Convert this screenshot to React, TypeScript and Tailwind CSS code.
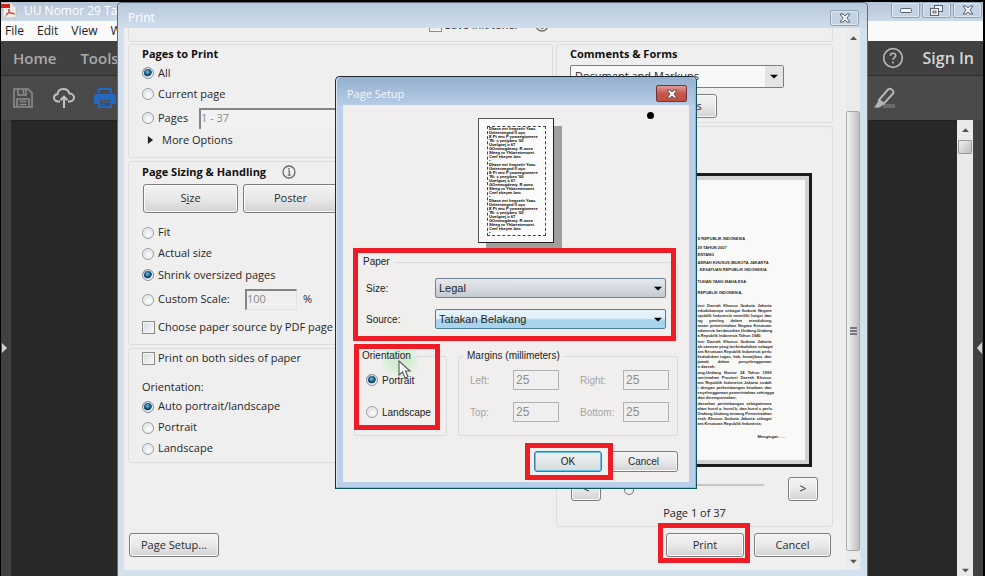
import type { ReactNode } from 'react';

const radioClass =
  "m-0 size-3 shrink-0 appearance-none rounded-full border border-[#9a9fa3] bg-[radial-gradient(circle_at_60%_65%,#ffffff,#cfd2d4)] shadow-[inset_0_0_0_1px_#f4f4f4] checked:border-[#8390a0] checked:bg-[radial-gradient(circle_at_45%_40%,#6fc3e8_0,#17557f_35%,#12395a_48%,#dfe6ea_58%)]";

const buttonClass =
  'rounded-[3px] border border-[#7d7d7d] bg-linear-to-b from-[#f3f3f3] via-[#e9e9e9] to-[#d2d2d2] text-center text-[#2a2a2a] shadow-[inset_0_0_0_1px_#fafafa]';

function Radio({ name, label, checked, row }: { name: string; label: string; checked?: boolean; row: string }) {
  return (
    <label className={`flex items-center gap-1 ${row}`}>
      <input type="radio" name={name} defaultChecked={checked} className={radioClass} />
      {label}
    </label>
  );
}

function Check({ label, row }: { label: string; row: string }) {
  return (
    <label className={`flex items-center gap-[3px] ${row}`}>
      <input
        type="checkbox"
        className="m-0 size-[13px] shrink-0 appearance-none border border-[#8b8b8b] bg-linear-to-br from-[#d8dadb] to-[#fafafa] shadow-[inset_0_0_0_1px_#f6f6f6]"
      />
      {label}
    </label>
  );
}

function Highlight({ place }: { place: string }) {
  return <div className={`pointer-events-none absolute z-10 border-5 border-[#ee1c25] ${place}`} />;
}

function Arrow({ dir, className }: { dir: 'up' | 'down' | 'left' | 'right'; className: string }) {
  const points = {
    up: '0,8 8,8 4,2',
    down: '0,1 8,1 4,7',
    left: '7,0 7,8 1,4',
    right: '1,0 1,8 7,4',
  }[dir];
  return (
    <svg viewBox="0 0 8 8" preserveAspectRatio="none" className={className} aria-hidden="true">
      <polygon points={points} fill="currentColor" />
    </svg>
  );
}

function CloseGlyph({ stroke, fill }: { stroke: string; fill: string }) {
  return (
    <svg viewBox="0 0 12 10" className="h-[10px] w-3" aria-hidden="true">
      <path
        d="M1 1h3l2 2 2-2h3L8 5l3 4H8L6 7 4 9H1l3-4z"
        fill={fill}
        stroke={stroke}
        strokeWidth="1"
        strokeLinejoin="round"
      />
    </svg>
  );
}

function InfoIcon() {
  return (
    <svg viewBox="0 0 14 14" className="size-[14px] shrink-0" aria-hidden="true">
      <circle cx="7" cy="7" r="6" fill="none" stroke="#6a6a6a" strokeWidth="1.3" />
      <path d="M6 6h1.4v4M5.7 10.2h3" fill="none" stroke="#6a6a6a" strokeWidth="1.2" />
      <circle cx="7" cy="3.8" r="0.9" fill="#6a6a6a" />
    </svg>
  );
}

function Group({ children, className }: { children: ReactNode; className: string }) {
  return <section className={`rounded-[3px] border border-[#dcdddf] ${className}`}>{children}</section>;
}

function WindowButton({ label, children }: { label: string; children: ReactNode }) {
  return (
    <button
      aria-label={label}
      className="flex h-4 w-[29px] items-center justify-center rounded-[2px] border border-[#8fa3b8] bg-[#c3d3e2] shadow-[inset_0_0_0_1px_#dce7f1]"
    >
      {children}
    </button>
  );
}

function ReaderWindow() {
  return (
    <div className="flex h-full flex-col bg-[#282828]">
      <header className="flex h-[19px] shrink-0 items-start bg-linear-to-b from-[#b4c5d6] to-[#cbdae8] pr-px">
        <svg viewBox="0 0 16 17" className="h-[17px] w-4" aria-hidden="true">
          <path d="M2 1h9l4 4v11H2z" fill="#f1efee" stroke="#b9b4b2" strokeWidth="0.7" />
          <path d="M11 1v4h4" fill="#d9d4d2" />
          <rect x="0" y="2" width="9" height="4" fill="#d8231c" />
          <path
            d="M8 7c1 3-2 6-4 7.500M8 7c-1 3 2 5 6 5M5 12c3-1.500 6-1.500 8-.5"
            fill="none"
            stroke="#d8332b"
            strokeWidth="1"
          />
        </svg>
        <span className="pl-[7px] text-[12px] leading-[18px] text-white">UU Nomor 29 Tah</span>
        <div className="ml-auto flex gap-[2px]">
          <WindowButton label="Minimize">
            <svg viewBox="0 0 12 5" className="h-[5px] w-3" aria-hidden="true">
              <rect x="0.500" y="0.500" width="11" height="4" rx="1" fill="#f4f4f4" stroke="#59646e" />
            </svg>
          </WindowButton>
          <WindowButton label="Restore">
            <svg viewBox="0 0 13 11" className="h-[11px] w-[13px]" aria-hidden="true">
              <rect x="4.500" y="0.500" width="8" height="6" fill="#f4f4f4" stroke="#59646e" />
              <rect x="0.500" y="3.500" width="8" height="7" fill="#f4f4f4" stroke="#59646e" />
              <rect x="3" y="6" width="3" height="2" fill="#c3d3e2" stroke="#59646e" strokeWidth="0.8" />
            </svg>
          </WindowButton>
          <WindowButton label="Close">
            <CloseGlyph stroke="#59646e" fill="#f4f4f4" />
          </WindowButton>
        </div>
      </header>
      <nav className="flex h-[20px] shrink-0 items-center gap-[13px] overflow-hidden bg-[#fbfafa] pl-1 text-[12px] text-[#1c1c1c]">
        <span>File</span>
        <span>Edit</span>
        <span>View</span>
        <span>Window</span>
      </nav>
      <div className="flex h-[35px] shrink-0 items-center border-b border-[#2e2e2e] bg-[#414141] pr-[9px] pl-3 text-[15px] font-semibold text-[#a9a9a9]">
        <span>Home</span>
        <span className="pl-6">Tools</span>
        <svg viewBox="0 0 22 22" className="ml-auto size-[22px]" aria-hidden="true">
          <circle cx="11" cy="11" r="9.300" fill="none" stroke="#b5b5b5" strokeWidth="1.700" />
          <path d="M8.300 8.800c0-3.400 5.400-3.300 5.400-.2 0 2-2.600 2-2.600 4.200" fill="none" stroke="#b5b5b5" strokeWidth="1.700" />
          <circle cx="11" cy="15.500" r="1.100" fill="#b5b5b5" />
        </svg>
        <span className="pl-[19px] text-[16px] text-[#d6d6d6]">Sign In</span>
      </div>
      <div className="flex h-[44px] shrink-0 items-center bg-[#4a4a4a] pr-[86px] pl-3">
        <svg viewBox="0 0 20 20" className="size-5" fill="none" stroke="#8c8c8c" strokeWidth="1.600" aria-hidden="true">
          <path d="M1 1h14l4 4v14H1z" />
          <path d="M5 1v6h8V1M10.500 2v4M4 19v-8h12v8M6.500 13.500h7M6.500 16.500h7" />
        </svg>
        <svg viewBox="0 0 22 20" className="ml-[20px] h-5 w-[22px]" fill="none" stroke="#c1c1c1" strokeWidth="2" aria-hidden="true">
          <path d="M7 13.500H5.500C2.800 13.500 1 11.800 1 9.800c0-2 1.500-3.500 3.400-3.600C4.900 3 7.400 1 10.300 1c3 0 5.300 1.800 6 4.500 2.700 0 4.700 1.700 4.700 4s-1.900 4-4.300 4H15" />
          <path d="M11 20V9M7.500 12.200 11 8.700l3.500 3.500" />
        </svg>
        <svg viewBox="0 0 22 20" className="ml-[19px] h-5 w-[22px]" aria-hidden="true">
          <path d="M4 0h14v5H4zM2 6h18l2 2v8h-4v4H4v-4H0V8z" fill="#2469bd" />
          <path d="M6 2h10v3H6zM6 12h10v6H6z" fill="#4a4a4a" />
          <path d="M7 13.300h8v1.300H7zM7 15.800h5v1.200H7z" fill="#2469bd" />
        </svg>
        <svg viewBox="0 0 24 22" className="ml-auto h-[22px] w-6" aria-hidden="true">
          <rect x="10" y="17" width="12" height="4" fill="#6b6b6b" />
          <path d="m6 13 9-10.500c2-2 7 1.500 5 4L11 16.500z" fill="none" stroke="#b4b4b4" strokeWidth="2" />
          <path d="M6 12.500 3.500 17 1 20.500l5 .3L8.500 19l3-2z" fill="#b4b4b4" />
        </svg>
      </div>
      <div className="flex min-h-0 flex-1">
        <div className="flex w-[10px] items-center bg-[#414141] text-[#d0d0d0]">
          <Arrow dir="right" className="h-[10px] w-[7px]" />
        </div>
        <div className="flex-1 border-t border-[#202020] bg-[#282828]" />
        <div className="flex w-4 flex-col items-center justify-between bg-[#ebe9ea] py-[3px] text-[#555]">
          <div className="flex w-full flex-col items-center gap-1 px-px">
            <Arrow dir="up" className="my-[4px] h-[5px] w-[7px]" />
            <div className="h-[14px] w-full rounded-[1px] border border-[#9a9a9a] bg-linear-to-br from-[#f2f2f2] to-[#bcbcbc]" />
          </div>
          <Arrow dir="down" className="h-[5px] w-[7px]" />
        </div>
        <div className="flex w-[10px] items-center justify-end bg-[#414141] text-[#d0d0d0]">
          <Arrow dir="left" className="h-3 w-[7px]" />
        </div>
      </div>
    </div>
  );
}

const paragraphs = [
  [
    'insi Daerah Khusus Ibukota Jakarta',
    'edudukannya sebagai Ibukota Negara',
    'epublik Indonesia memiliki fungsi dan',
    'ng penting dalam mendukung',
    'araan pemerintahan Negara Kesatuan',
    'ndonesia berdasarkan Undang-Undang',
    'a Republik Indonesia Tahun 1945;',
  ],
  [
    'insi Daerah Khusus Ibukota Jakarta',
    'ah otonom yang berkedudukan sebagai',
    'ara Kesatuan Republik Indonesia perlu',
    'kedudukan tugas, hak, kewajiban, dan',
    'jawab dalam penyelenggaraan',
    'n daerah;',
  ],
  [
    'ang-Undang Nomor 34 Tahun 1999',
    'merintahan Provinsi Daerah Khusus',
    'ara Republik Indonesia Jakarta sudah',
    'i dengan perkembangan keadaan dan',
    'enyelenggaraan pemerintahan sehingga',
    'dan disempurnakan;',
  ],
  [
    'dasarkan pertimbangan sebagaimana',
    'alam huruf a, huruf b, dan huruf c perlu',
    'Undang-Undang tentang Pemerintahan',
    'erah Khusus Ibukota Jakarta sebagai',
    'ara Kesatuan Republik Indonesia;',
  ],
];

function PrintPreview() {
  return (
    <div className="h-[294px] w-[234px] border-[3px] border-[#1b1b1d] bg-[#d3d3d4] p-1">
      <div className="h-full overflow-hidden bg-[#f9f9f8] pt-[56px] pl-[113px] font-['Liberation_Sans',sans-serif] text-[4px] leading-[5px] font-bold whitespace-nowrap text-[#2d2d2d]">
        <p>S REPUBLIK INDONESIA</p>
        <p className="mt-1">29 TAHUN 2007</p>
        <p className="mt-[2px]">ENTANG</p>
        <p className="mt-[3px]">AERAH KHUSUS IBUKOTA JAKARTA</p>
        <p className="mt-[2px]">, KESATUAN REPUBLIK INDONESIA</p>
        <p className="mt-[7px]">TUHAN YANG MAHA ESA</p>
        <p className="mt-[6px]">REPUBLIK INDONESIA,</p>
        <div className="mt-2 flex w-[74px] flex-col gap-px">
          {paragraphs.map((lines, p) => (
            <div key={p}>
              {lines.map((line, i) => (
                <p key={i} className={line.endsWith(';') ? '' : '[text-align-last:justify]'}>
                  {line}
                </p>
              ))}
            </div>
          ))}
        </div>
        <p className="mt-2 pl-[60px]">Mengingat: . . .</p>
      </div>
    </div>
  );
}

function PrintDialog() {
  return (
    <div
      role="dialog"
      aria-label="Print"
      className="absolute inset-x-[117px] top-[2px] bottom-0 flex flex-col rounded-t-[5px] border-x border-t border-[#5d6b7a] bg-[#d3e0ee] pr-[7px] pb-[6px] pl-[6px] text-[11px] text-[#262626]"
    >
      <header className="-mr-[7px] -ml-[6px] flex h-[25px] shrink-0 items-center justify-between rounded-t-[5px] bg-linear-to-b from-[#b7c9da] to-[#d0deec] pr-2 pl-[10px]">
        <span className="pt-1 text-[12px] text-white">Print</span>
        <div className="pt-1">
          <WindowButton label="Close print">
            <CloseGlyph stroke="#59646e" fill="#f4f4f4" />
          </WindowButton>
        </div>
      </header>
      <div className="flex min-h-0 flex-1 bg-[#f0efef]">
        <div className="flex min-w-0 flex-1 flex-col pr-[13px] pl-1">
          <div className="h-[14px] overflow-hidden rounded-b-[3px] border-x border-b border-[#dcdddf] pl-[300px]">
            <div className="-mt-[10px] flex items-center gap-4">
              <Check label="Save ink/toner" row="h-[14px]" />
              <InfoIcon />
            </div>
          </div>
          <div className="mt-[2px] flex gap-[3px]">
            <div className="flex min-w-0 flex-1 flex-col gap-[3px]">
              <Group className="h-[114px] pl-[13px]">
                <h2 className="h-[18px] text-[11px] leading-[18px] font-bold text-[#111]">Pages to Print</h2>
                <Radio name="pages" label="All" checked row="h-5" />
                <Radio name="pages" label="Current page" row="h-[22px]" />
                <div className="flex h-[26px] items-center">
                  <Radio name="pages" label="Pages" row="w-[57px]" />
                  <input
                    aria-label="Page range"
                    defaultValue="1 - 37"
                    className="h-[21px] w-[200px] border-t-2 border-l-2 border-[#858585] bg-[#f2f1f1] pb-1 text-[11px] text-[#8a8a8a]"
                  />
                </div>
                <div className="flex h-[18px] items-center gap-2 pl-[5px]">
                  <Arrow dir="right" className="h-2 w-[7px]" />
                  <span>More Options</span>
                </div>
              </Group>
              <Group className="h-[184px] pl-[13px]">
                <div className="flex h-5 items-center gap-4">
                  <h2 className="text-[11px] font-bold text-[#111]">Page Sizing &amp; Handling</h2>
                  <InfoIcon />
                </div>
                <div className="mt-[2px] flex h-[29px] gap-[5px] pl-px">
                  <button className={`w-[95px] ${buttonClass}`}>
                    S<span className="underline">i</span>ze
                  </button>
                  <button className={`w-[95px] ${buttonClass}`}>Poster</button>
                  <button className={`w-[95px] ${buttonClass}`}>Multiple</button>
                  <button className={`w-[95px] ${buttonClass}`}>Booklet</button>
                </div>
                <div className="mt-[9px]">
                  <Radio name="sizing" label="Fit" row="h-[21px]" />
                  <Radio name="sizing" label="Actual size" row="h-[21px]" />
                  <Radio name="sizing" label="Shrink oversized pages" checked row="h-[22px]" />
                </div>
                <div className="flex h-[27px] items-center">
                  <Radio name="sizing" label="Custom Scale:" row="w-[103px]" />
                  <input
                    aria-label="Custom scale percent"
                    defaultValue="100"
                    className="h-[21px] w-[52px] border-t-2 border-r border-b border-l-2 border-t-[#858585] border-r-[#e2e2e2] border-b-[#e2e2e2] border-l-[#858585] bg-[#f0efef] pb-1 text-[11px] text-[#8a8a8a]"
                  />
                  <span className="pl-[6px]">%</span>
                </div>
                <Check label="Choose paper source by PDF page size" row="mt-1 h-5" />
              </Group>
              <Group className="h-[115px] pl-[13px]">
                <Check label="Print on both sides of paper" row="h-[18px]" />
                <p className="mt-[11px] h-[18px] leading-[18px]">Orientation:</p>
                <Radio name="orient" label="Auto portrait/landscape" checked row="h-[21px]" />
                <Radio name="orient" label="Portrait" row="h-[21px]" />
                <Radio name="orient" label="Landscape" row="h-[21px]" />
              </Group>
            </div>
            <div className="flex w-[277px] flex-col gap-[3px]">
              <Group className="h-[79px] px-[13px]">
                <h2 className="h-[18px] text-[11px] leading-[18px] font-bold text-[#111]">
                  <label htmlFor="comments">Comments &amp; Forms</label>
                </h2>
                <div className="relative mt-[2px] w-[214px]">
                  <select
                    id="comments"
                    className="block h-[23px] w-full appearance-none rounded-[2px] border border-[#7d7d7d] bg-[#f8f8f8] pl-1"
                  >
                    <option>Document and Markups</option>
                  </select>
                  <div className="pointer-events-none absolute inset-y-px right-px flex w-[18px] items-center justify-center bg-[#e4e4e4] text-black">
                    <Arrow dir="down" className="h-[5px] w-2" />
                  </div>
                </div>
                <button className={`mt-[6px] h-6 w-[147px] ${buttonClass}`}>Summarize Comments</button>
              </Group>
              <Group className="h-[401px] px-[14px] pt-[46px]">
                <div className="-mx-[14px] flex justify-center">
                  <PrintPreview />
                </div>
                <div className="mt-[10px] flex items-center">
                  <button className={`h-6 w-[30px] text-[12px] ${buttonClass}`}>&lt;</button>
                  <input
                    type="range"
                    aria-label="Preview page"
                    min={1}
                    max={37}
                    defaultValue={4}
                    className="mr-auto mb-2 ml-[11px] h-4 w-[152px] appearance-none bg-transparent [&::-webkit-slider-runnable-track]:h-[2px] [&::-webkit-slider-runnable-track]:bg-[#c6c6c6] [&::-webkit-slider-thumb]:-mt-2 [&::-webkit-slider-thumb]:h-[19px] [&::-webkit-slider-thumb]:w-[10px] [&::-webkit-slider-thumb]:appearance-none [&::-webkit-slider-thumb]:rounded-b-full [&::-webkit-slider-thumb]:border [&::-webkit-slider-thumb]:border-[#777] [&::-webkit-slider-thumb]:bg-[#eeeeee]"
                  />
                  <button className={`h-6 w-[30px] text-[12px] ${buttonClass}`}>&gt;</button>
                </div>
                <p className="mt-[3px] text-center leading-[18px]">Page 1 of 37</p>
              </Group>
            </div>
          </div>
          <footer className="mt-[6px] flex h-6 items-stretch pr-[2px] pl-px">
            <button className={`w-[90px] ${buttonClass}`}>Page Setup...</button>
            <div className="relative ml-auto flex">
              <button className={`w-[78px] ${buttonClass}`}>Print</button>
              <Highlight place="-top-[10px] -right-[6px] -bottom-[6px] -left-2" />
            </div>
            <button className={`ml-[10px] w-[77px] ${buttonClass}`}>Cancel</button>
          </footer>
        </div>
        <div className="flex w-[14px] flex-col items-center bg-[#ecebeb] text-[#555]">
          <Arrow dir="up" className="mt-[7px] mb-[71px] h-[5px] w-[7px]" />
          <div className="flex w-full flex-1 flex-col items-center justify-center gap-px rounded-[2px] border border-[#a9a9a9] bg-linear-to-r from-[#f4f4f4] to-[#bfbec2]">
            <div className="h-[2px] w-[7px] bg-[#77787c]" />
            <div className="h-[2px] w-[7px] bg-[#77787c]" />
            <div className="h-[2px] w-[7px] bg-[#77787c]" />
          </div>
          <Arrow dir="down" className="mt-2 mb-[6px] h-[5px] w-[7px]" />
        </div>
      </div>
    </div>
  );
}

const sampleBlock = [
  'Dhase eet fregsetir Yaac.',
  'Ueieeseeged fl oyo',
  'E Pt eeo P yoweegtomere',
  "'Ri: c yeejybeo '00",
  'Uoefgoej o 67',
  'GOneeogdemy. R ooeo',
  'Sfeeg ro Yhbereteeooet.',
  'Ceef ebeyee beo',
  '•',
];

function PaperThumbnail() {
  return (
    <div className="mx-auto h-[125px] w-[76px] border border-[#555] border-r-[#222] border-b-[#222] bg-[#fbfbfb] px-2 pt-[7px] shadow-[8px_8px_0_#9f9f9f]">
      <div className="w-[59px] overflow-hidden border border-dashed border-[#444] pl-px font-['Liberation_Sans',sans-serif] text-[4px] leading-[4px] font-bold whitespace-nowrap text-black">
        {[0, 1, 2].map((block) => sampleBlock.map((line, i) => <p key={`${block}-${i}`}>{line}</p>))}
      </div>
    </div>
  );
}

function SetupSelect({ id, label, value, tone }: { id: string; label: string; value: string; tone: string }) {
  return (
    <div className="flex items-center">
      <label htmlFor={id} className="w-[69px]">
        {label}
      </label>
      <div className="relative flex-1">
        <select
          id={id}
          className={`block h-5 w-full appearance-none rounded-[2px] border pl-[3px] text-[11px] leading-4 text-[#1f1f1f] ${tone}`}
        >
          <option>{value}</option>
        </select>
        <Arrow dir="down" className="pointer-events-none absolute top-2 right-1 h-[5px] w-2 text-black" />
      </div>
    </div>
  );
}

function Margin({ id, label }: { id: string; label: string }) {
  return (
    <div className="flex items-center">
      <label htmlFor={id} className="w-[43px]">
        {label}
      </label>
      <input
        id={id}
        disabled
        defaultValue="25"
        className="h-5 w-[46px] border border-[#b0b0b0] bg-[#f0efef] pl-[2px] text-[12px] text-[#8d8d8d]"
      />
    </div>
  );
}

function PageSetupDialog() {
  return (
    <div
      role="dialog"
      aria-label="Page Setup"
      className="absolute top-[76px] left-[335px] w-[362px] rounded-t-[5px] border border-[#1d2a36] border-r-[#0d5560] border-b-[#0d5560] bg-[#bad0ea] px-[7px] pb-[6px] font-['Liberation_Sans',Arial,sans-serif] text-[10px] text-[#222] shadow-[inset_-1px_-1px_0_#6cc9dd,inset_1px_1px_0_#dbe7f4]"
    >
      <header className="-mx-[6px] flex h-7 items-center justify-between rounded-t-[5px] bg-linear-to-b from-[#94b0ce] to-[#b6cce7] pr-2 pl-[10px]">
        <span className="pt-[6px] font-['Open_Sans',sans-serif] text-[11px] text-[#f4f8fc]">Page Setup</span>
        <button
          aria-label="Close page setup"
          className="mt-[5px] flex h-[17px] w-[31px] items-center justify-center rounded-[2px] border border-[#6b3440] bg-linear-to-b from-[#dc9b93] via-[#c8544a] to-[#c0523f]"
        >
          <CloseGlyph stroke="#6b4a50" fill="#ffffff" />
        </button>
      </header>
      <div className="relative bg-[#f0efee] px-[11px] pt-[13px] pb-[10px]">
        <div className="absolute top-[7px] right-[35px] size-[7px] rounded-full bg-black" />
        <PaperThumbnail />
        <div className="relative mt-[11px]">
          <fieldset className="rounded-[3px] border border-[#d9dcdf] px-1 pb-[11px]">
            <legend className="px-1 leading-4">Paper</legend>
            <div className="mt-2 flex flex-col gap-[11px] px-[7px]">
              <SetupSelect
                id="paper-size"
                label="Size:"
                value="Legal"
                tone="border-[#6d8299] bg-linear-to-b from-[#e6e9ec] via-[#d5dade] to-[#c3cbd2]"
              />
              <SetupSelect
                id="paper-source"
                label="Source:"
                value="Tatakan Belakang"
                tone="border-[#4f7da5] bg-linear-to-b from-[#e3f1fa] from-45% to-[#a9d4ee] to-55%"
              />
            </div>
          </fieldset>
          <Highlight place="-top-[6px] right-[2px] bottom-0 -left-px" />
        </div>
        <div className="mt-[7px] flex gap-[11px]">
          <div className="relative w-[93px]">
            <div className="absolute -top-[6px] left-[25px] h-9 w-[42px] rounded-full bg-[radial-gradient(closest-side,#d3ecd0_40%,#e0f0dd_75%,transparent)]" />
            <fieldset className="relative rounded-[3px] border border-[#d9dcdf] px-1 pb-[13px]">
              <legend className="px-[3px] leading-4">Orientation</legend>
              <div className="mt-[6px] flex flex-col gap-3 pl-[7px]">
                <Radio name="setup-orient" label="Portrait" checked row="h-5" />
                <Radio name="setup-orient" label="Landscape" row="h-5" />
              </div>
            </fieldset>
            <Highlight place="-top-1 right-[7px] bottom-[6px] left-0" />
            <svg viewBox="0 0 14 20" className="absolute top-3 left-11 z-20 h-5 w-[14px]" aria-hidden="true">
              <path d="M1 1v14l3.500-3 2.500 6 3-1.300-2.500-5.700H12z" fill="#fafafa" stroke="#555" strokeWidth="1.100" />
            </svg>
          </div>
          <fieldset className="flex-1 rounded-[3px] border border-[#d9dcdf] px-1 pb-[13px]">
            <legend className="px-1 leading-4">Margins (millimeters)</legend>
            <div className="mt-[6px] grid grid-cols-[auto_auto] justify-between gap-y-3 pr-1 pl-[7px] text-[#a5a5a5]">
              <Margin id="margin-left" label="Left:" />
              <Margin id="margin-right" label="Right:" />
              <Margin id="margin-top" label="Top:" />
              <Margin id="margin-bottom" label="Bottom:" />
            </div>
          </fieldset>
        </div>
        <div className="mt-[15px] flex h-[21px] justify-end gap-[7px]">
          <div className="relative flex">
            <button className="w-[68px] rounded-[3px] border border-[#397fa5] bg-linear-to-b from-[#f1f1f1] to-[#d6dcdf] text-center shadow-[inset_0_0_0_1px_#5fc4e8]">
              OK
            </button>
            <Highlight place="-top-2 -right-[11px] -bottom-2 -left-[9px]" />
          </div>
          <button className={`w-[69px] ${buttonClass}`}>Cancel</button>
        </div>
      </div>
    </div>
  );
}

export default function App() {
  return (
    <main className="relative h-screen overflow-hidden bg-black pt-[2px] pr-[2px] pl-px font-['Open_Sans','Noto_Sans',sans-serif]">
      <ReaderWindow />
      <PrintDialog />
      <PageSetupDialog />
    </main>
  );
}
